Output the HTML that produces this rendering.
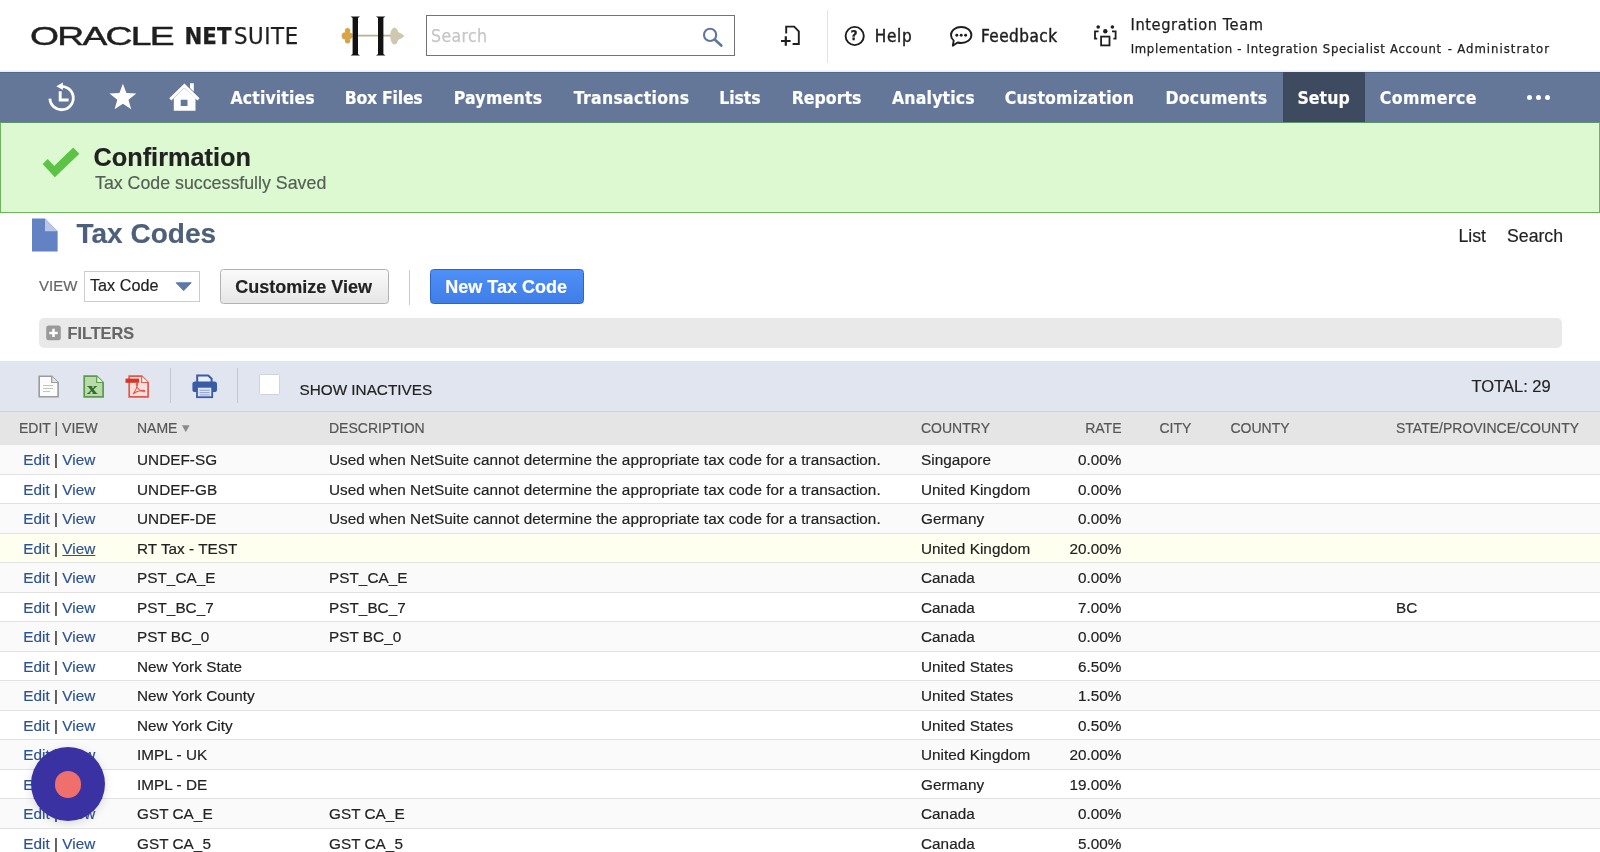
<!DOCTYPE html>
<html lang="en"><head><meta charset="utf-8"><title>Tax Codes - NetSuite</title>
<style>
*{box-sizing:border-box;margin:0;padding:0}
html,body{width:1600px;height:852px;overflow:hidden;background:#fff}
body{position:relative;font-family:'Liberation Sans',Arial,Helvetica,sans-serif;color:#222;-webkit-font-smoothing:antialiased;-webkit-text-stroke:0.18px}
#page{position:absolute;left:0;top:0;width:1600px;height:852px;overflow:hidden;will-change:transform}
.a{position:absolute;white-space:pre;line-height:1}
.os{font-family:'DejaVu Sans Condensed','DejaVu Sans','Liberation Sans',sans-serif;-webkit-text-stroke:0.25px}
#hdr{left:0;top:0;width:1600px;height:72px;background:#fff}
#hdrline{left:0;top:70px;width:1600px;height:2px;background:linear-gradient(#f6f8fc,#e6ecf6)}
#nav{left:0;top:72px;width:1600px;height:50px;background:#647799;border-top:1px solid #56688a}
.nv{color:#fff;font-weight:bold;font-size:17.5px;top:90.3px;font-family:'DejaVu Sans Condensed','DejaVu Sans','Liberation Sans',sans-serif}
#setupbg{left:1283px;top:72px;width:82px;height:50px;background:#3e4a5f}
#conf{left:0;top:122px;width:1600px;height:91px;background:#ddf9d1;border:1px solid #6db55a;border-top:1.5px solid #5d9468;border-left-width:1.5px}
.lnk{color:#2c5292}
.row{left:0;width:1600px;height:29.5px;border-bottom:1px solid #e2e2e2}
.c{font-size:15.3px;color:#222;letter-spacing:.03px}
.h{font-size:14px;color:#555;top:421px}
</style></head>
<body>
<div id="page">
<div class="a" id="hdr"></div><div class="a" id="hdrline"></div>
<div class="a" id="oracle" style="-webkit-text-stroke:0.45px;left:29.700px;top:23.700px;font-size:25px;color:#1f1f1f;letter-spacing:-1.15px;transform-origin:0 0;transform:scaleX(1.49)">ORACLE</div>
<div class="a os" id="net" style="left:184.500px;top:24.900px;font-size:23.7px;font-weight:bold;color:#1f1f1f;transform-origin:0 0">NET</div>
<div class="a os" id="suite" style="left:234px;top:24.900px;font-size:23.7px;letter-spacing:0.55px;color:#1f1f1f;transform-origin:0 0">SUITE</div>
<svg class="a" style="left:338px;top:12px" width="72" height="48" viewBox="338 12 72 48">
<rect x="357" y="34.7" width="34" height="1.8" fill="#b9b294"/>
<g fill="#d9a445"><circle cx="347.6" cy="30.8" r="2.7"/><circle cx="347.6" cy="40.8" r="2.7"/><circle cx="345.2" cy="35.8" r="3.6"/><circle cx="349.5" cy="35.8" r="3.2"/></g>
<g fill="#cfc8b0"><ellipse cx="394.5" cy="36" rx="4.3" ry="8.6"/><path d="M392 29 L402 34 L404.5 36 L402 38 L392 43Z"/></g>
<g fill="#121212"><path d="M350.6 16.4h9.4l-2 1.6v36l2 1.6h-9.4l2-1.6v-36z"/><path d="M376 16.4h9.4l-2 1.6v36l2 1.6h-9.4l2-1.6v-36z"/></g>
</svg>
<div class="a" id="sbox" style="left:426px;top:15px;width:308.5px;height:40.5px;border:1.3px solid #737373;background:#fff"></div>
<div class="a os" id="stext" style="left:431px;top:27.800px;font-size:17.5px;letter-spacing:0.388px;color:#c6c6c6">Search</div>
<svg class="a" style="left:700px;top:24px" width="26" height="26" viewBox="700 24 26 26"><circle cx="710.1" cy="34.900" r="6.1" fill="none" stroke="#60779a" stroke-width="2.1"/><path d="M714.700 39.600L721.300 45.600" stroke="#60779a" stroke-width="2.7" stroke-linecap="round"/></svg>
<svg class="a" style="left:778px;top:22px" width="26" height="28" viewBox="778 22 26 28"><path d="M786.2 33.5V26.6h8l4.6 4.8v12.6h-6.2" fill="none" stroke="#1e1e1e" stroke-width="1.9"/><path d="M781 41h9.6M785.8 36.2v9.6" stroke="#1e1e1e" stroke-width="2.2"/></svg>
<div class="a" style="left:827px;top:10px;width:1px;height:53px;background:#e3e3e3"></div>
<svg class="a" style="left:842px;top:23px" width="26" height="26" viewBox="842 23 26 26"><circle cx="854.7" cy="36" r="9.1" fill="none" stroke="#1e1e1e" stroke-width="1.9"/></svg>
<div class="a os" style="left:850.400px;top:29.200px;font-size:13.5px;font-weight:bold;color:#1e1e1e">?</div>
<div class="a os" id="help" style="-webkit-text-stroke:0.45px;left:874.800px;top:28.300px;font-size:17px;letter-spacing:0.703px;color:#1e1e1e">Help</div>
<svg class="a" style="left:946px;top:22px" width="30" height="30" viewBox="946 22 30 30"><path d="M961.2 27c5.6 0 10.2 3.4 10.2 8s-4.6 8-10.2 8c-1.3 0-2.5-.2-3.600-.5l-4.800 3.200 0.900-5.100c-1.700-1.500-2.700-3.400-2.700-5.600 0-4.600 4.600-8 10.200-8z" fill="none" stroke="#1e1e1e" stroke-width="1.9" stroke-linejoin="round"/><circle cx="956.8" cy="35.200" r="1.45" fill="#1e1e1e"/><circle cx="961.2" cy="35.200" r="1.45" fill="#1e1e1e"/><circle cx="965.6" cy="35.200" r="1.45" fill="#1e1e1e"/></svg>
<div class="a os" id="feedback" style="-webkit-text-stroke:0.45px;left:981px;top:28.300px;font-size:17px;letter-spacing:0.461px;color:#1e1e1e">Feedback</div>
<svg class="a" style="left:1090px;top:22px" width="30" height="28" viewBox="1090 22 30 28"><g fill="#1e1e1e"><circle cx="1098.2" cy="27" r="1.8"/><circle cx="1112.4" cy="27" r="1.8"/><circle cx="1105.3" cy="31.300" r="2.2"/></g><g fill="none" stroke="#1e1e1e" stroke-width="1.8"><path d="M1098.600 31.400h-3.600v7.200h2.200"/><path d="M1112 31.400h3.600v7.200h-2.200"/><rect x="1101.100" y="36.600" width="8.400" height="8.800"/></g></svg>
<div class="a os" id="team" style="left:1130.500px;top:16.700px;font-size:16.3px;letter-spacing:0.58px;color:#1e1e1e">Integration Team</div>
<div class="a os" id="role" style="left:1130.700px;top:41.700px;font-size:13px;color:#1e1e1e"><span style="letter-spacing:0.67px">Implementation - Integration Specialist Account</span><span class="a" style="left:317px;top:0">-</span><span class="a" style="left:326.500px;top:0;letter-spacing:1.004px">Administrator</span></div>
<div class="a" id="nav"></div><div class="a" id="setupbg"></div>
<svg class="a" style="left:44px;top:78px" width="36" height="38" viewBox="44 78 36 38"><path d="M59.600 86.500A11.700 11.700 0 1 1 49.900 98.600" fill="none" stroke="#fff" stroke-width="2.8"/><path d="M56.300 86.200l6.600-3.700v7.400z" fill="#fff"/><path d="M60.200 91.200v8.800h8.400" fill="none" stroke="#fff" stroke-width="2.9"/></svg>
<svg class="a" style="left:106px;top:80px" width="34" height="34" viewBox="106 80 34 34"><path d="M122.900 83.800l3.500 9.300 9.900 0.400-7.800 6.200 2.700 9.600-8.300-5.500-8.300 5.500 2.700-9.600-7.800-6.200 9.900-0.400z" fill="#fff"/></svg>
<svg class="a" style="left:166px;top:80px" width="38" height="34" viewBox="166 80 38 34"><path d="M170.300 99.300L184.400 85.600 198.500 99.300" fill="none" stroke="#fff" stroke-width="3"/><path d="M190 83.300h3.800v8.500l-3.800-3.700z" fill="#fff"/><path d="M173.800 98.300L184.400 88 195.500 98.300V110.800H173.800z M180.700 99.800v6.300h6.800v-6.300z" fill="#fff" fill-rule="evenodd"/></svg>
<div class="a nv" id="nv0" style="left:230.5px;letter-spacing:0.13px">Activities</div>
<div class="a nv" id="nv1" style="left:344.7px;letter-spacing:-0.256px">Box Files</div>
<div class="a nv" id="nv2" style="left:453.7px;letter-spacing:0.269px">Payments</div>
<div class="a nv" id="nv3" style="left:573.75px;letter-spacing:0.311px">Transactions</div>
<div class="a nv" id="nv4" style="left:719.2px;letter-spacing:-0.05px">Lists</div>
<div class="a nv" id="nv5" style="left:791.7px;letter-spacing:0.028px">Reports</div>
<div class="a nv" id="nv6" style="left:892.0px;letter-spacing:0.181px">Analytics</div>
<div class="a nv" id="nv7" style="left:1004.7px;letter-spacing:0.186px">Customization</div>
<div class="a nv" id="nv8" style="left:1165.45px;letter-spacing:0.264px">Documents</div>
<div class="a nv" id="nv9" style="left:1297.45px;letter-spacing:0.055px">Setup</div>
<div class="a nv" id="nv10" style="left:1379.7px;letter-spacing:0.441px">Commerce</div>
<div class="a" style="left:1527.0px;top:94.500px;width:5px;height:5px;border-radius:50%;background:#fff"></div>
<div class="a" style="left:1536.2px;top:94.500px;width:5px;height:5px;border-radius:50%;background:#fff"></div>
<div class="a" style="left:1545.4px;top:94.500px;width:5px;height:5px;border-radius:50%;background:#fff"></div>
<div class="a" id="conf"></div>
<svg class="a" style="left:40px;top:145px" width="42" height="36" viewBox="40 145 42 36"><path d="M42.600 164L47.750 158.900 54.200 165.900 73.250 147.600 79.400 153.700 54.850 177.300z" fill="#5dc345"/></svg>
<div class="a" id="cf1" style="left:93.500px;top:145.200px;font-size:25.3px;font-weight:bold;color:#222">Confirmation</div>
<div class="a" id="cf2" style="left:95px;top:174.500px;font-size:17.8px;color:#555f55">Tax Code successfully Saved</div>
<svg class="a" style="left:30px;top:216px" width="30" height="38" viewBox="30 216 30 38"><path d="M32 218.400h13l12.600 12.850v20.350h-25.600z" fill="#6282c3"/><path d="M45 218.400l12.600 12.850h-12.600z" fill="#b9c6e6"/></svg>
<div class="a" id="title" style="left:76.500px;top:220.300px;font-size:28px;font-weight:bold;color:#4d5f79">Tax Codes</div>
<div class="a" id="list" style="left:1458.500px;top:227.500px;font-size:17.7px;color:#222">List</div>
<div class="a" id="search2" style="left:1507px;top:227.500px;font-size:17.7px;color:#222">Search</div>
<div class="a" id="viewlbl" style="left:39px;top:277.700px;font-size:15px;color:#666">VIEW</div>
<div class="a" id="sel" style="left:83.500px;top:270.500px;width:116px;height:31.500px;border:1px solid #ccc;background:#fff"></div>
<div class="a" id="seltxt" style="left:90px;top:277.300px;font-size:16.2px;color:#222">Tax Code</div>
<svg class="a" style="left:174px;top:280px" width="20" height="14" viewBox="174 280 20 14"><path d="M176.200 282.800h15l-7.500 7.800z" fill="#5b79a8" stroke="#5b79a8" stroke-width="1" stroke-linejoin="round"/></svg>
<div class="a" id="cbtn" style="left:219.500px;top:269px;width:169.500px;height:35px;border:1px solid #b2b2b2;border-radius:3.500px;background:linear-gradient(#fafafa,#e6e6e6)"></div>
<div class="a" id="cbtxt" style="left:235.300px;top:278px;font-size:18px;font-weight:bold;color:#222">Customize View</div>
<div class="a" style="left:408.500px;top:269.500px;width:1px;height:35px;background:#c8c8c8"></div>
<div class="a" id="nbtn" style="left:430px;top:268.500px;width:154px;height:35.500px;border:1px solid #2d64c8;border-radius:3.500px;background:linear-gradient(#4e90f8,#3f7ee6)"></div>
<div class="a" id="nbtxt" style="left:445.300px;top:278px;font-size:18px;font-weight:bold;color:#fff">New Tax Code</div>
<div class="a" id="filt" style="left:38.500px;top:318px;width:1523px;height:30px;border-radius:5px;background:#e9e9e9"></div>
<svg class="a" style="left:45px;top:324px" width="18" height="18" viewBox="45 324 18 18"><rect x="46.200" y="325.600" width="14.600" height="14.600" rx="2.500" fill="#9a9a9a"/><path d="M49.300 332.900h8.400M53.500 328.700v8.400" stroke="#fff" stroke-width="2.500"/></svg>
<div class="a" id="ftxt" style="left:67.500px;top:324.500px;font-size:16.25px;font-weight:bold;color:#666">FILTERS</div>
<div class="a" id="tb" style="left:0;top:361px;width:1600px;height:51px;background:#e0e5ef;border-bottom:1px solid #cfd1d6"></div>
<svg class="a" style="left:36px;top:373px" width="26" height="28" viewBox="36 373 26 28"><path d="M39.200 376.200h12.500l6.400 6.300v14.300h-18.900z" fill="#fbfbfb" stroke="#9b9b9b" stroke-width="1.600"/><path d="M51.700 376.200v6.300h6.400" fill="#e4e4e4" stroke="#9b9b9b" stroke-width="1.200"/><path d="M43 385.500h10M43 388.500h10M43 391.500h7" stroke="#c4c4c4" stroke-width="1.200"/></svg>
<svg class="a" style="left:81px;top:373px" width="26" height="28" viewBox="81 373 26 28"><path d="M84.200 376.200h12.500l6.400 6.300v14.300h-18.900z" fill="#b9dba9" stroke="#5c9a4c" stroke-width="1.700"/><path d="M96.700 376.200v6.300h6.400" fill="#e3f1dc" stroke="#5c9a4c" stroke-width="1.200"/></svg>
<div class="a" id="xl" style="left:86.500px;top:379.500px;font-size:17px;font-weight:bold;color:#2f6b2a;font-family:'Liberation Serif',serif;transform-origin:0 0;transform:scaleX(1.25)">x</div>
<svg class="a" style="left:123px;top:373px" width="28" height="28" viewBox="123 373 28 28"><path d="M129.200 376.200h12.500l6.400 6.300v14.300h-18.900z" fill="#fae0dc" stroke="#e2574c" stroke-width="1.700"/><path d="M141.700 376.200v6.300h6.400" fill="#fff" stroke="#e2574c" stroke-width="1.200"/><rect x="125.500" y="378.600" width="13.600" height="4.200" fill="#d8352a"/><path d="M133 394c2-2.500 4.200-6.500 4.600-9.500.3-2-1.400-2-1.400 0 .3 3.500 4.300 7.300 7.300 7.300 1.800 0 1.500-1.400 0-1.400-3.300 0-8 1.600-10.500 3.600z" fill="none" stroke="#e2574c" stroke-width="1.100"/></svg>
<div class="a" style="left:170.300px;top:368px;width:1.200px;height:35px;background:#c3c7d2"></div>
<svg class="a" style="left:190px;top:373px" width="30" height="28" viewBox="190 373 30 28"><path d="M197.200 382v-6.400h11l3.400 3.200v3.200" fill="#e8eefa" stroke="#3a5ba5" stroke-width="2"/><rect x="192.400" y="381.500" width="24.600" height="10.600" rx="2.600" fill="#3a5ba5"/><rect x="197" y="386.800" width="15.200" height="10.400" fill="#dfe6f5" stroke="#3a5ba5" stroke-width="1.800"/><path d="M199.500 390.300h10.200M199.500 392.600h10.200M199.500 394.900h10.200" stroke="#8fa3cf" stroke-width="1"/></svg>
<div class="a" style="left:237px;top:368px;width:1.200px;height:35px;background:#c3c7d2"></div>
<div class="a" id="chk" style="left:258.800px;top:374.200px;width:21.200px;height:20.600px;background:#fff;border:1px solid #d0d3da;border-radius:1.500px"></div>
<div class="a" id="showin" style="left:299.500px;top:382px;font-size:15.3px;color:#222">SHOW INACTIVES</div>
<div class="a" id="total" style="left:1471.500px;top:377.500px;font-size:16.5px;color:#222">TOTAL: 29</div>
<div class="a" id="th" style="left:0;top:412px;width:1600px;height:33px;background:#e5e5e5"></div>
<div class="a h" id="h0" style="left:19px">EDIT | VIEW</div>
<div class="a h" id="h1" style="left:137px">NAME</div>
<div class="a h" id="h2" style="left:329px">DESCRIPTION</div>
<div class="a h" id="h3" style="left:921px">COUNTRY</div>
<div class="a h" id="h4" style="right:478.5px">RATE</div>
<div class="a h" id="h5" style="left:1159.5px">CITY</div>
<div class="a h" id="h6" style="left:1230.5px">COUNTY</div>
<div class="a h" id="h7" style="left:1396px">STATE/PROVINCE/COUNTY</div>
<svg class="a" style="left:181px;top:423px" width="10" height="10" viewBox="181 423 10 10"><path d="M182 425.200h7.600l-3.800 7z" fill="#8a8a8a"/></svg>
<div class="a row" style="top:445.0px;background:#fafafa"></div>
<div class="a c" style="left:23.300px;top:452.3px"><span class="lnk">Edit</span> | <span class="lnk">View</span></div>
<div class="a c" style="left:137px;top:452.3px">UNDEF-SG</div>
<div class="a c" style="left:329px;top:452.3px">Used when NetSuite cannot determine the appropriate tax code for a transaction.</div>
<div class="a c" style="left:921px;top:452.3px">Singapore</div>
<div class="a c" style="right:478.5px;top:452.3px">0.00%</div>
<div class="a row" style="top:474.5px;background:#fff"></div>
<div class="a c" style="left:23.300px;top:481.8px"><span class="lnk">Edit</span> | <span class="lnk">View</span></div>
<div class="a c" style="left:137px;top:481.8px">UNDEF-GB</div>
<div class="a c" style="left:329px;top:481.8px">Used when NetSuite cannot determine the appropriate tax code for a transaction.</div>
<div class="a c" style="left:921px;top:481.8px">United Kingdom</div>
<div class="a c" style="right:478.5px;top:481.8px">0.00%</div>
<div class="a row" style="top:504.0px;background:#fafafa"></div>
<div class="a c" style="left:23.300px;top:511.3px"><span class="lnk">Edit</span> | <span class="lnk">View</span></div>
<div class="a c" style="left:137px;top:511.3px">UNDEF-DE</div>
<div class="a c" style="left:329px;top:511.3px">Used when NetSuite cannot determine the appropriate tax code for a transaction.</div>
<div class="a c" style="left:921px;top:511.3px">Germany</div>
<div class="a c" style="right:478.5px;top:511.3px">0.00%</div>
<div class="a row" style="top:533.5px;background:#fffff0"></div>
<div class="a c" style="left:23.300px;top:540.8px"><span class="lnk">Edit</span> | <span class="lnk" style="text-decoration:underline">View</span></div>
<div class="a c" style="left:137px;top:540.8px">RT Tax - TEST</div>
<div class="a c" style="left:921px;top:540.8px">United Kingdom</div>
<div class="a c" style="right:478.5px;top:540.8px">20.00%</div>
<div class="a row" style="top:563.0px;background:#fafafa"></div>
<div class="a c" style="left:23.300px;top:570.3px"><span class="lnk">Edit</span> | <span class="lnk">View</span></div>
<div class="a c" style="left:137px;top:570.3px">PST_CA_E</div>
<div class="a c" style="left:329px;top:570.3px">PST_CA_E</div>
<div class="a c" style="left:921px;top:570.3px">Canada</div>
<div class="a c" style="right:478.5px;top:570.3px">0.00%</div>
<div class="a row" style="top:592.5px;background:#fff"></div>
<div class="a c" style="left:23.300px;top:599.8px"><span class="lnk">Edit</span> | <span class="lnk">View</span></div>
<div class="a c" style="left:137px;top:599.8px">PST_BC_7</div>
<div class="a c" style="left:329px;top:599.8px">PST_BC_7</div>
<div class="a c" style="left:921px;top:599.8px">Canada</div>
<div class="a c" style="right:478.5px;top:599.8px">7.00%</div>
<div class="a c" style="left:1396px;top:599.8px">BC</div>
<div class="a row" style="top:622.0px;background:#fafafa"></div>
<div class="a c" style="left:23.300px;top:629.3px"><span class="lnk">Edit</span> | <span class="lnk">View</span></div>
<div class="a c" style="left:137px;top:629.3px">PST BC_0</div>
<div class="a c" style="left:329px;top:629.3px">PST BC_0</div>
<div class="a c" style="left:921px;top:629.3px">Canada</div>
<div class="a c" style="right:478.5px;top:629.3px">0.00%</div>
<div class="a row" style="top:651.5px;background:#fff"></div>
<div class="a c" style="left:23.300px;top:658.8px"><span class="lnk">Edit</span> | <span class="lnk">View</span></div>
<div class="a c" style="left:137px;top:658.8px">New York State</div>
<div class="a c" style="left:921px;top:658.8px">United States</div>
<div class="a c" style="right:478.5px;top:658.8px">6.50%</div>
<div class="a row" style="top:681.0px;background:#fafafa"></div>
<div class="a c" style="left:23.300px;top:688.3px"><span class="lnk">Edit</span> | <span class="lnk">View</span></div>
<div class="a c" style="left:137px;top:688.3px">New York County</div>
<div class="a c" style="left:921px;top:688.3px">United States</div>
<div class="a c" style="right:478.5px;top:688.3px">1.50%</div>
<div class="a row" style="top:710.5px;background:#fff"></div>
<div class="a c" style="left:23.300px;top:717.8px"><span class="lnk">Edit</span> | <span class="lnk">View</span></div>
<div class="a c" style="left:137px;top:717.8px">New York City</div>
<div class="a c" style="left:921px;top:717.8px">United States</div>
<div class="a c" style="right:478.5px;top:717.8px">0.50%</div>
<div class="a row" style="top:740.0px;background:#fafafa"></div>
<div class="a c" style="left:23.300px;top:747.3px"><span class="lnk">Edit</span> | <span class="lnk">View</span></div>
<div class="a c" style="left:137px;top:747.3px">IMPL - UK</div>
<div class="a c" style="left:921px;top:747.3px">United Kingdom</div>
<div class="a c" style="right:478.5px;top:747.3px">20.00%</div>
<div class="a row" style="top:769.5px;background:#fff"></div>
<div class="a c" style="left:23.300px;top:776.8px"><span class="lnk">Edit</span> | <span class="lnk">View</span></div>
<div class="a c" style="left:137px;top:776.8px">IMPL - DE</div>
<div class="a c" style="left:921px;top:776.8px">Germany</div>
<div class="a c" style="right:478.5px;top:776.8px">19.00%</div>
<div class="a row" style="top:799.0px;background:#fafafa"></div>
<div class="a c" style="left:23.300px;top:806.3px"><span class="lnk">Edit</span> | <span class="lnk">View</span></div>
<div class="a c" style="left:137px;top:806.3px">GST CA_E</div>
<div class="a c" style="left:329px;top:806.3px">GST CA_E</div>
<div class="a c" style="left:921px;top:806.3px">Canada</div>
<div class="a c" style="right:478.5px;top:806.3px">0.00%</div>
<div class="a row" style="top:828.5px;background:#fff"></div>
<div class="a c" style="left:23.300px;top:835.8px"><span class="lnk">Edit</span> | <span class="lnk">View</span></div>
<div class="a c" style="left:137px;top:835.8px">GST CA_5</div>
<div class="a c" style="left:329px;top:835.8px">GST CA_5</div>
<div class="a c" style="left:921px;top:835.8px">Canada</div>
<div class="a c" style="right:478.5px;top:835.8px">5.00%</div>
<div class="a" style="left:31.300px;top:747.300px;width:74px;height:74px;border-radius:50%;background:#3a32a3;box-shadow:0 2px 8px rgba(60,60,90,.18)"></div>
<div class="a" style="left:54.800px;top:771px;width:26.500px;height:26.500px;border-radius:50%;background:#ee6f6c"></div>
</div>
</body></html>
